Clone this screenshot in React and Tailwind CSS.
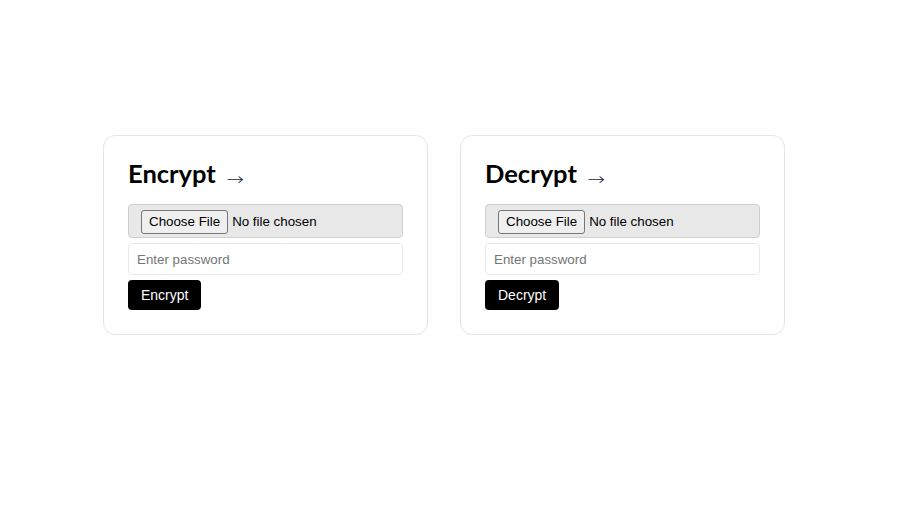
import React from 'react'

function Card({ title }) {
  return (
    <div className="w-[325px] rounded-xl border border-[#e5e5e5] bg-white p-6">
      <h2 className="mb-[14px] h-[30px] whitespace-nowrap font-['Lato',sans-serif] text-[25.5px] font-bold leading-[26px] text-black">
        {title}
        <span className="ml-[12px] inline-block align-[-2px] font-['DejaVu_Sans',sans-serif] text-[17px] font-light text-[#1a2233] scale-x-125">→</span>
      </h2>
      <div className="flex flex-col gap-[5px]">
        <input
          type="file"
          className="h-[34px] w-full rounded border border-[#cfcfcf] bg-[#e8e8e8] px-3 pb-[7px] pt-[5px] font-['Liberation_Sans',sans-serif] text-[13.33px] text-black file:mr-[4px] file:rounded-[3px] file:border file:border-solid file:border-[#767676] file:bg-[#efefef] file:px-[7px] file:py-[1px] file:font-['Liberation_Sans',sans-serif] file:text-[13.33px] file:text-black"
        />
        <input
          type="password"
          placeholder="Enter password"
          className="h-[32px] w-full rounded border border-[#e8e8e8] bg-white px-2 font-['Liberation_Sans',sans-serif] text-[13.33px] text-black placeholder:text-[#757575] outline-none"
        />
        <div>
          <button className="h-[30px] rounded bg-black px-[13px] font-['Liberation_Sans',sans-serif] text-[14px] text-white">
            {title}
          </button>
        </div>
      </div>
    </div>
  )
}

export default function App() {
  return (
    <div className="min-h-[506px] bg-white pl-[103px] pt-[135px]">
      <div className="flex gap-[32px]">
        <Card title="Encrypt" />
        <Card title="Decrypt" />
      </div>
    </div>
  )
}
